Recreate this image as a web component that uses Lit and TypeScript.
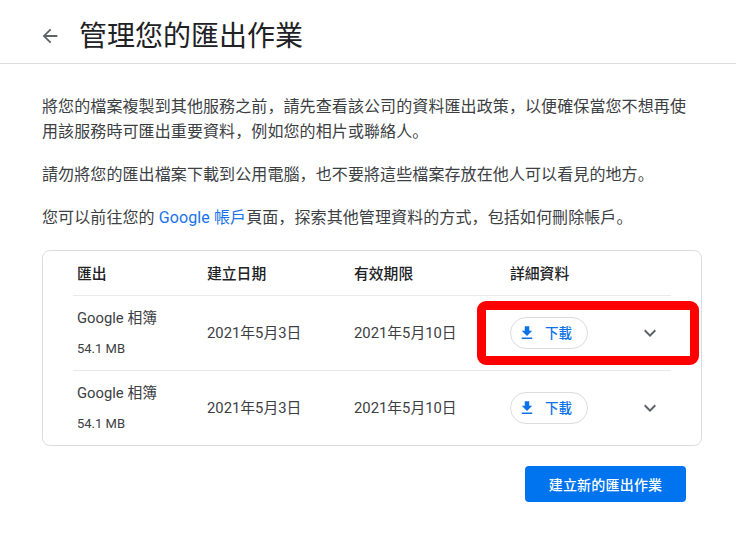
import { LitElement, html, css } from "lit";
import { customElement } from "lit/decorators.js";

@customElement("app-root")
export class AppRoot extends LitElement {
  static styles = css`
    :host { display: block; width: 736px; height: 547px; background: #fff; color: #3c4043; font-family: Roboto, "Noto Sans CJK SC", sans-serif; overflow: hidden; position: relative; }
    header { box-sizing: border-box; border-bottom: 1px solid #dadce0; height: 64px; display: flex; align-items: center; padding: 10px 0 0 39px; }
    header svg { width: 22px; height: 22px; display: block; margin-bottom: 2px; }
    h1 { margin: 0 0 0 18px; font-size: 28px; font-weight: 400; line-height: 40px; color: #202124; }
    main { padding: 30px 34px 0 42px; }
    p { margin: 0 0 18px; font-size: 16px; line-height: 25px; letter-spacing: 0.1px; }
    a { color: #1a73e8; text-decoration: none; }
    .card { margin-top: 20px; height: 196px; box-sizing: border-box; border: 1px solid #dadce0; border-radius: 8px; padding: 0 30px; }
    .row { box-sizing: border-box; display: grid; grid-template-columns: 130px 147px 156px 1fr; align-items: center; border-bottom: 1px solid #e8eaed; height: 75px; font-size: 14.8px; color: #3c4043; }
    .row:last-child { border-bottom: 0; height: 74px; }
    .row.head { height: 45px; font-weight: 500; color: #202124; padding-bottom: 2px; }
    .row > * { padding-left: 4px; }
    .date { padding-bottom: 3px; }
    .name { font-size: 14.8px; line-height: 20px; }
    .size { font-size: 13px; line-height: 16px; margin-top: 13px; }
    .name-cell { margin-top: -1px; }
    .actions { display: flex; align-items: center; justify-content: space-between; padding-right: 9px; }
    .dl { display: inline-flex; align-items: center; box-sizing: border-box; width: 78px; height: 32px; border: 1px solid #dadce0; border-radius: 16px; padding-left: 7px; color: #0b72e7; font-size: 13.5px; font-weight: 500; background: #fff; }
    .dl svg { width: 18px; height: 18px; margin-right: 9px; fill: #0b72e7; }
    .label { margin-bottom: 2px; }
    .chev { width: 24px; height: 24px; fill: #5f6368; display: block; }
    .foot { display: flex; justify-content: flex-end; margin-top: 20px; padding-right: 16px; }
    .create { width: 161px; height: 36px; border: 0; border-radius: 4px; background: #0073ee; color: #fff; font: 500 14px Roboto, "Noto Sans CJK SC", sans-serif; letter-spacing: 0.2px; padding: 0; }
    .mark { position: absolute; left: 477px; top: 301px; width: 222px; height: 64px; box-sizing: border-box; border: 9px solid #f00; border-radius: 9px; pointer-events: none; }
  `;

  row() {
    return html`<div class="row">
      <div class="name-cell"><div class="name">Google 相簿</div><div class="size">54.1 MB</div></div>
      <div class="date">2021年5月3日</div>
      <div class="date">2021年5月10日</div>
      <div class="actions">
        <span class="dl"><svg viewBox="0 0 24 24"><path d="M19 9h-4V3H9v6H5l7 7 7-7zM5 18v2h14v-2H5z"/></svg><span class="label">下載</span></span>
        <svg class="chev" viewBox="0 0 24 24"><path d="M16.59 8.59 12 13.17 7.41 8.59 6 10l6 6 6-6z"/></svg>
      </div>
    </div>`;
  }

  render() {
    return html`
      <header>
        <svg viewBox="0 0 24 24" fill="#5f6368"><path d="M20 11H7.83l5.59-5.59L12 4l-8 8 8 8 1.41-1.41L7.83 13H20v-2z"/></svg>
        <h1>管理您的匯出作業</h1>
      </header>
      <main>
        <p>將您的檔案複製到其他服務之前，請先查看該公司的資料匯出政策，以便確保當您不想再使用該服務時可匯出重要資料，例如您的相片或聯絡人。</p>
        <p>請勿將您的匯出檔案下載到公用電腦，也不要將這些檔案存放在他人可以看見的地方。</p>
        <p>您可以前往您的 <a href="#">Google 帳戶</a>頁面，探索其他管理資料的方式，包括如何刪除帳戶。</p>
        <div class="card">
          <div class="row head"><div>匯出</div><div>建立日期</div><div>有效期限</div><div>詳細資料</div></div>
          ${this.row()}
          ${this.row()}
        </div>
        <div class="foot"><button class="create">建立新的匯出作業</button></div>
      </main>
      <div class="mark"></div>
    `;
  }
}
